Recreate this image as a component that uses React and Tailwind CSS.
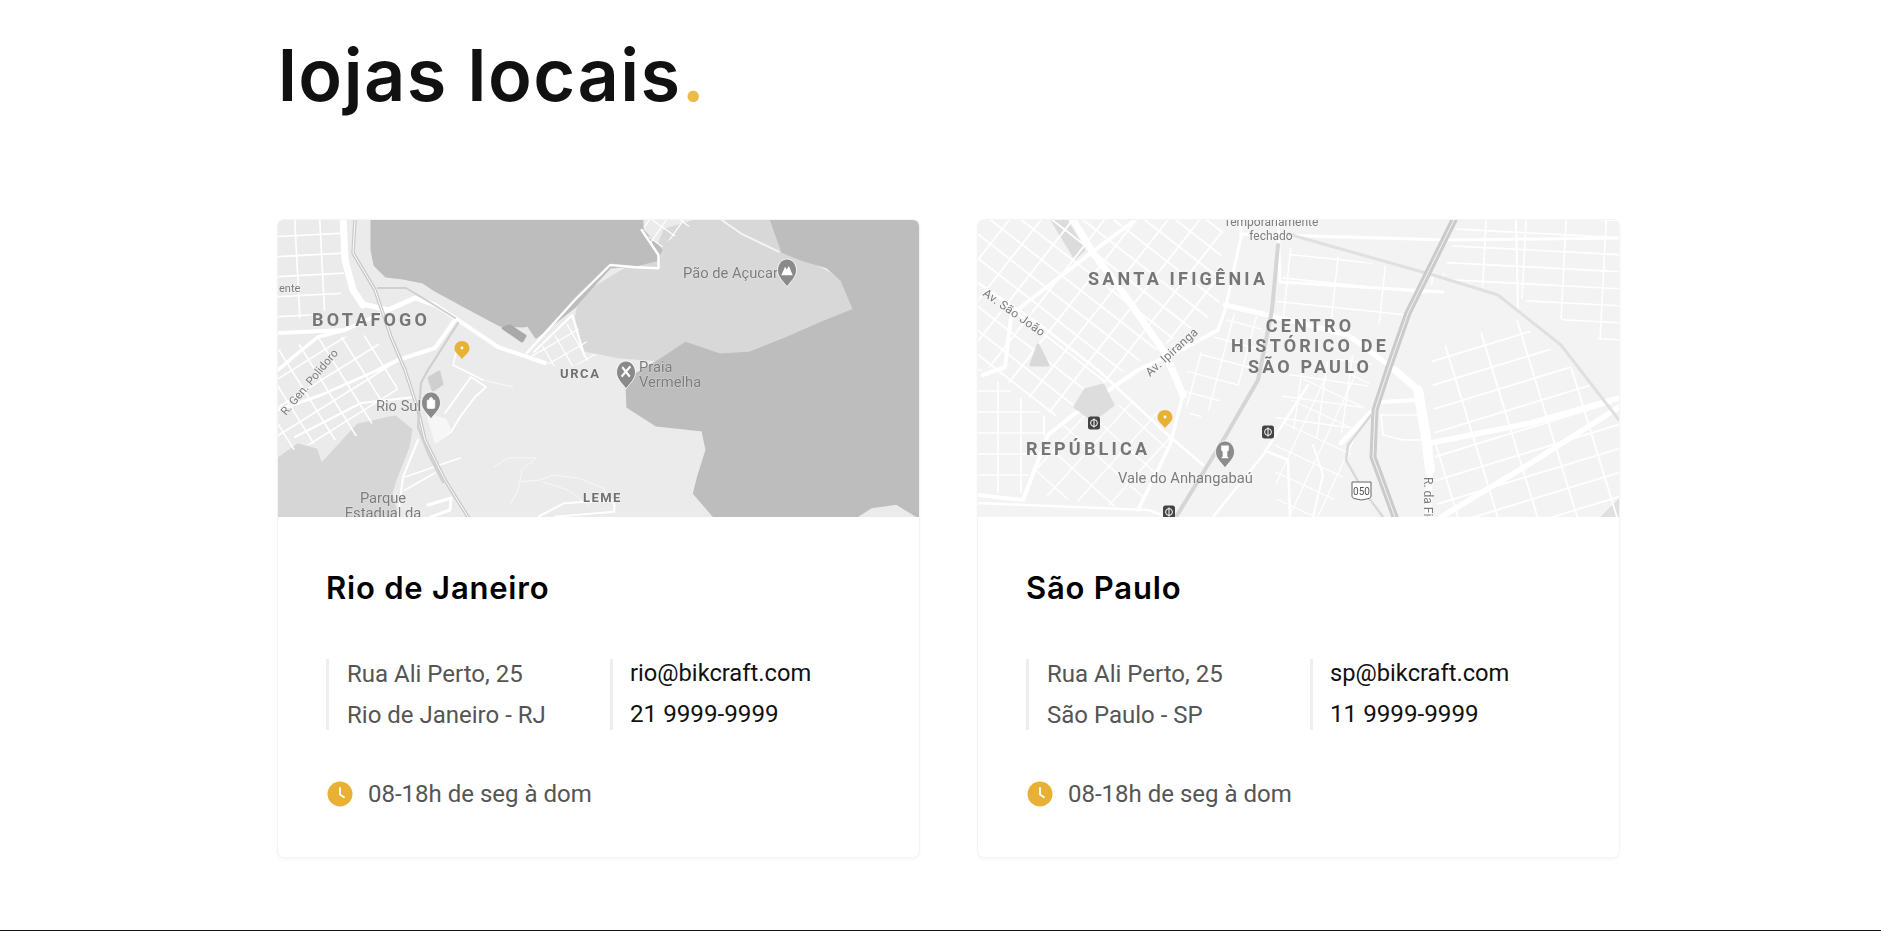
const R = "font-['Roboto',sans-serif]";

const toStr = (pts, ox) =>
  pts.map(([x, y]) => (ox === undefined ? `${x},${y}` : `${((x - ox) / 2.373).toFixed(1)},${((y - 30) / 3).toFixed(1)}`)).join(" ");

function Road({ pts, ox, w = 2, c = "#ffffff" }) {
  return <polyline points={toStr(pts, ox)} fill="none" stroke={c} strokeWidth={w} strokeLinejoin="round" strokeLinecap="round" />;
}

function Area({ pts, ox, fill }) {
  return <polygon points={toStr(pts, ox)} fill={fill} stroke={fill} strokeWidth="3" strokeLinejoin="round" />;
}

function Grid({ id, clip, ox, angle, sx, sy, w = 1.6, c = "#ffffff" }) {
  const lines = [];
  for (let i = -900; i < 1500; i += sx) lines.push(<line key={"a" + i} x1={i} y1={-900} x2={i} y2={1300} />);
  for (let j = -900; j < 1300; j += sy) lines.push(<line key={"b" + j} x1={-900} y1={j} x2={1500} y2={j} />);
  return (
    <>
      <clipPath id={id}>
        <polygon points={toStr(clip, ox)} />
      </clipPath>
      <g clipPath={`url(#${id})`}>
        <g transform={`rotate(${angle} 320 150)`} stroke={c} strokeWidth={w}>
          {lines}
        </g>
      </g>
    </>
  );
}

function Pin({ cx, top, color = "#e8b135", w = 15, h = 18, dot = true, glyph }) {
  return (
    <g transform={`translate(${cx - w / 2} ${top}) scale(${w / 15} ${h / 18})`}>
      <path d="M7.5 0C3.4 0 0 3.2 0 7.3c0 2.5 1.3 4.1 3 6 1.7 1.8 3.6 3.3 4.5 4.7.9-1.4 2.8-2.9 4.5-4.7 1.7-1.9 3-3.5 3-6C15 3.2 11.6 0 7.5 0z" fill={color} stroke={dot ? "none" : "#ffffff"} strokeWidth={dot ? 0 : 0.6} />
      {dot && <circle cx="7.5" cy="7" r="1.4" fill="#ffffff" />}
      {glyph}
    </g>
  );
}

function Metro({ x, y }) {
  return (
    <g transform={`translate(${x - 6} ${y - 6.5})`}>
      <rect width="12" height="13" rx="2.5" fill="#444444" />
      <circle cx="6" cy="6.5" r="3.4" fill="none" stroke="#ffffff" strokeWidth="1" />
      <line x1="6" y1="2" x2="6" y2="11" stroke="#ffffff" strokeWidth="1" />
    </g>
  );
}

function Label({ x, y, children, size = 14.7, weight = 400, sp = 0, anchor = "start", fill = "#7c7c7c", rotate }) {
  return (
    <text
      x={x}
      y={y}
      fontFamily="Roboto, sans-serif"
      fontSize={size}
      fontWeight={weight}
      letterSpacing={sp}
      textAnchor={anchor}
      fill={fill}
      stroke="#ffffff"
      strokeOpacity="0.4"
      strokeWidth="0.8"
      paintOrder="stroke"
      transform={rotate ? `rotate(${rotate} ${x} ${y})` : undefined}
    >
      {children}
    </text>
  );
}

const HOOD = { size: 18, weight: 700, sp: 3.2, fill: "#767676" };

function RioMap() {
  const ox = 42;
  return (
    <svg viewBox="0 0 641 297" className="block w-full h-[297px] blur-[0.4px]">
      <rect width="641" height="297" fill="#ebebeb" />
      <Area fill="#d6d6d6" pts={[[-4,300],[-4,242],[20,225],[38,230],[43,245],[80,205],[117,197],[133,210],[130,227],[117,260],[113,273],[120,300]]} />
      <Area ox={ox} fill="#d8d8d8" pts={[[1040,30],[1215,30],[1240,125],[1290,150],[1385,215],[1412,300],[1330,340],[1240,390],[1160,430],[1090,435],[1010,400],[950,450],[850,440],[770,420],[750,320],[760,260],[940,120],[960,60]]} />
      <Area fill="#bdbdbd" pts={[[94,-3],[94,30],[97,45],[108,56],[125,58],[145,62],[157,70],[190,88],[222,105],[245,106],[250,105],[258,117],[296,87],[320,60],[332,47],[357,45],[378,40],[383,30],[364,10],[364,-3]]} />
      <Area ox={ox} fill="#bdbdbd" pts={[[1210,20],[1240,125],[1290,150],[1345,170],[1380,210],[1410,300],[1330,340],[1240,390],[1160,430],[1090,435],[1010,400],[950,450],[870,510],[872,590],[940,645],[1050,660],[1060,720],[1040,800],[1030,850],[1085,930],[1400,930],[1450,890],[1510,880],[1575,930],[1575,20]]} />

      <Grid id="r1" clip={[[0,0],[66,0],[66,70],[50,90],[0,105]]} angle={-3} sx={25} sy={20} />
      <Grid id="r2" clip={[[0,130],[45,118],[95,115],[112,140],[120,170],[85,215],[30,225],[0,235]]} angle={-32} sx={20} sy={24} />
      <Grid id="r3" ox={ox} clip={[[640,440],[740,330],[800,440],[720,480]]} angle={-30} sx={16} sy={15} w={1.2} />
      <Grid id="r4" ox={ox} clip={[[905,30],[1040,30],[960,100],[940,140]]} angle={35} sx={14} sy={16} w={1.2} />

      <Road w={7} pts={[[65,-5],[67,40],[75,70],[85,85]]} />
      <Road w={5} pts={[[85,84],[110,90],[137,78],[157,85]]} />
      <Road w={4} pts={[[0,113],[67,110],[110,90]]} />
      <Road w={3.5} pts={[[0,150],[20,133],[40,117],[67,110]]} />
      <Road w={4} pts={[[157,85],[180,100],[220,127],[267,143]]} />
      <Road w={4} pts={[[100,150],[120,140],[157,128],[177,100]]} />
      <Road w={3} pts={[[0,190],[43,175],[100,150]]} />
      <Road w={2.2} pts={[[17,217],[83,183],[137,177]]} />
      <Road w={2} pts={[[140,220],[125,257],[120,297]]} />
      <Road w={1.6} pts={[[127,257],[182,238]]} />
      <Road w={1.6} pts={[[127,270],[157,253]]} />
      <Road w={2} pts={[[167,193],[193,157],[208,167],[197,177],[182,197],[173,212],[158,222]]} />
      <Road w={1.6} pts={[[180,125],[175,145],[205,160]]} />
      <Road w={3} pts={[[150,285],[173,278],[172,290],[153,297]]} />
      <Road ox={ox} w={2.4} pts={[[632,430],[750,265],[830,165],[890,172],[945,175],[945,135],[905,60]]} />
      <Road ox={ox} w={2} pts={[[650,425],[740,315],[770,440]]} />
      <Road ox={ox} w={2} c="#f4f4f4" pts={[[1095,30],[1140,70],[1230,125]]} />
      <Road ox={ox} w={2} pts={[[660,920],[720,880],[840,870],[840,905],[700,920]]} />
      <Road w={1} c="#f8f8f8" pts={[[216,247],[230,238],[258,238],[244,250],[240,270],[232,285]]} />
      <Road w={1} c="#f8f8f8" pts={[[240,262],[262,260],[275,255],[300,258],[325,268],[335,285]]} />
      <Road w={1} c="#f8f8f8" pts={[[265,262],[290,270],[310,285]]} />
      <Road w={1.2} c="#f8f8f8" pts={[[205,160],[235,167]]} />

      <Road w={3.5} c="#c9c9c9" pts={[[77,0],[75,33],[97,70],[113,117],[127,150],[140,190],[147,220],[167,260],[190,297]]} />
      <Road w={1} pts={[[77,0],[75,33],[97,70],[113,117],[127,150],[140,190],[147,220],[167,260],[190,297]]} />
      <Road w={2} c="#cfcfcf" pts={[[100,68],[128,68],[153,83],[177,98]]} />
      <Road w={2.2} c="#cfcfcf" pts={[[180,103],[150,150],[143,163],[140,207],[150,233],[165,262]]} />
      <Area fill="#cfcfcf" pts={[[151,158],[161,152],[164,164],[155,170]]} />
      <Area fill="#a9a9a9" pts={[[225,108],[232,106],[247,116],[244,121]]} />
      <Area fill="#f6f6f6" pts={[[150,195],[167,200],[172,210],[158,222]]} />

      <Label x={34} y={106} {...HOOD}>BOTAFOGO</Label>
      <Label x={282} y={158} size={13} weight={700} sp={1.6} fill="#707070">URCA</Label>
      <Label x={305} y={282} size={13} weight={700} sp={1.4} fill="#707070">LEME</Label>
      <Label x={405} y={58}>Pão de Açucar</Label>
      <Label x={361} y={152}>Praia</Label>
      <Label x={361} y={167}>Vermelha</Label>
      <Label x={98} y={191}>Rio Sul</Label>
      <Label x={105} y={283} anchor="middle">Parque</Label>
      <Label x={105} y={298} anchor="middle">Estadual da</Label>
      <Label x={1} y={72} size={11}>ente</Label>
      <Label x={8} y={196} size={11.5} rotate={-50}>R. Gen. Polidoro</Label>

      <Pin cx={509} top={39} w={19} h={28} color="#8a8a8a" dot={false} glyph={<path d="M3 10.5l3-5.5 1.3 1.8L9 4.5l3 6z" fill="#ffffff" />} />
      <Pin cx={348} top={141} w={19} h={28} color="#8a8a8a" dot={false} glyph={<path d="M4 10l7-6.5M4.5 4l6 6" stroke="#ffffff" strokeWidth="1.6" />} />
      <Pin cx={153} top={172} w={19} h={27} color="#8a8a8a" dot={false} glyph={<path d="M4.5 5.5h6v4.5a1 1 0 0 1-1 1h-4a1 1 0 0 1-1-1zM6 5.5c0-2.5 3-2.5 3 0" fill="#ffffff" stroke="#ffffff" strokeWidth="0.5" />} />
      <Pin cx={184} top={121} />
    </svg>
  );
}

function SpMap() {
  const ox = 18;
  return (
    <svg viewBox="0 0 641 297" className="block w-full h-[297px] blur-[0.4px]">
      <rect width="641" height="297" fill="#f3f3f3" />
      <Area fill="#dcdcdc" pts={[[74,0],[88,0],[106,30],[97,38]]} />
      <Area ox={ox} fill="#e0e0e0" pts={[[1500,920],[1540,870],[1540,920]]} />

      <Grid id="s1" ox={ox} clip={[[18,30],[600,30],[590,300],[330,510],[200,620],[18,450]]} angle={38} sx={25} sy={19} w={1.8} />
      <Grid id="s2" ox={ox} clip={[[18,470],[190,630],[120,850],[18,850]]} angle={0} sx={23} sy={21} w={1.7} />
      <Grid id="s3" clip={[[453,130],[540,100],[641,190],[641,297],[460,297]]} angle={-17} sx={38} sy={23} w={1.8} />
      <Grid id="s4" ox={ox} clip={[[1160,30],[1540,30],[1540,420],[1300,260],[1120,200]]} angle={3} sx={40} sy={17} w={1.6} />
      <Grid id="s5" ox={ox} clip={[[760,110],[1110,200],[1030,330],[900,360],[720,310]]} angle={6} sx={48} sy={24} w={1.5} />
      <Grid id="s6" ox={ox} clip={[[620,310],[700,320],[660,500],[530,640],[490,520]]} angle={15} sx={22} sy={20} w={1.4} />
      <Grid id="s7" ox={ox} clip={[[760,480],[960,420],[930,620],[850,700],[720,640]]} angle={8} sx={24} sy={22} w={1.4} />
      <Grid id="s8" ox={ox} clip={[[210,640],[420,560],[480,680],[400,900],[130,850]]} angle={42} sx={26} sy={26} w={1.4} />
      <Grid id="s9" clip={[[320,160],[395,150],[375,230],[350,297],[300,297],[295,230]]} angle={25} sx={26} sy={24} w={1.2} />

      <Road w={7} pts={[[93,-4],[115,33],[143,70],[187,133],[205,175]]} />
      <Road w={3.5} pts={[[205,175],[192,225],[160,290]]} />
      <Road w={4} pts={[[157,0],[113,33],[43,87],[33,97],[27,147],[5,155]]} />
      <Road w={2.6} pts={[[0,63],[60,103],[120,150],[190,215],[225,245]]} />
      <Road w={4} pts={[[240,110],[203,130],[160,150],[95,195],[70,215],[45,280],[0,275]]} />
      <Road w={3} pts={[[263,0],[263,17],[247,90],[240,110]]} />
      <Road w={5} pts={[[247,85],[290,95],[370,115],[417,150]]} />
      <Road w={7} pts={[[417,150],[440,170]]} />
      <Road w={10} pts={[[440,170],[448,217],[452,250]]} />
      <Road w={6} pts={[[452,250],[450,297]]} />
      <Road w={5.5} pts={[[453,223],[553,203],[641,178]]} />
      <Road w={5.5} pts={[[463,297],[553,243],[641,187]]} />
      <Road w={4} pts={[[403,182],[440,180]]} />
      <Road w={5} pts={[[363,223],[400,185]]} />
      <Road w={3} pts={[[263,14],[470,20],[641,18]]} />
      <Road w={2.5} pts={[[0,283],[170,290],[190,297]]} />
      <Road w={3} pts={[[300,0],[302,62],[465,72]]} />
      <Road w={2.5} pts={[[290,232],[310,240],[312,297]]} />
      <Road w={2.5} pts={[[235,297],[285,235],[330,165]]} />
      <Road w={2} pts={[[335,297],[345,255],[335,225]]} />
      <Road w={1.6} pts={[[403,195],[440,195]]} />
      <Road w={1.6} pts={[[403,195],[405,215],[425,220],[445,220]]} />
      <Road w={2} pts={[[538,0],[540,90]]} />

      <Road w={3} c="#e0e0e0" pts={[[310,14],[455,55],[520,75],[583,125],[641,200]]} />
      <Road w={7} c="#cbcbcb" pts={[[476,0],[430,93],[410,150],[397,190],[395,237],[417,297]]} />
      <Road w={1} c="#f5f5f5" pts={[[476,0],[430,93],[410,150],[397,190],[395,237],[417,297]]} />
      <Road w={4} c="#d5d5d5" pts={[[300,25],[294,90],[280,160],[247,217],[198,297]]} />
      <Road w={2.5} c="#d9d9d9" pts={[[393,195],[370,225],[368,240],[385,270],[405,297]]} />
      <Area fill="#dddddd" pts={[[107,170],[125,165],[135,185],[115,200],[97,187]]} />
      <Area fill="#d9d9d9" pts={[[60,125],[70,145],[53,145]]} />

      <Label x={110} y={65} {...HOOD}>SANTA IFIGÊNIA</Label>
      <Label x={332} y={112} {...HOOD} anchor="middle">CENTRO</Label>
      <Label x={332} y={132} {...HOOD} anchor="middle">HISTÓRICO DE</Label>
      <Label x={332} y={153} {...HOOD} anchor="middle">SÃO PAULO</Label>
      <Label x={48} y={235} {...HOOD}>REPÚBLICA</Label>
      <Label x={140} y={263}>Vale do Anhangabaú</Label>
      <Label x={293} y={6} size={12} anchor="middle">Temporariamente</Label>
      <Label x={293} y={20} size={12} anchor="middle">fechado</Label>
      <Label x={4} y={75} size={12} sp={0.3} rotate={35}>Av. São João</Label>
      <Label x={172} y={157} size={12} sp={0.3} rotate={-42}>Av. Ipiranga</Label>
      <Label x={446} y={257} size={12} rotate={90}>R. da Fig</Label>

      <g transform="translate(373 261)">
        <path d="M1 1h19v14c0 1.5-1.2 2-2 2.5L10.5 19 3 17.5c-1-.5-2-1-2-2.5z" fill="#ffffff" stroke="#666666" strokeWidth="1" />
        <text x="10.5" y="14" textAnchor="middle" fontFamily="Roboto, sans-serif" fontSize="10" fill="#555555">050</text>
      </g>
      <Metro x={116} y={203} />
      <Metro x={290} y={212} />
      <Metro x={191} y={292} />
      <Pin cx={247} top={221} w={19} h={27} color="#8c8c8c" dot={false} glyph={<path d="M4.5 3h6v3.2l-1.2 1v3l1.2 1.3h-6l1.2-1.3v-3l-1.2-1z" fill="#ffffff" />} />
      <Pin cx={187} top={190} />
    </svg>
  );
}

function Clock() {
  return (
    <svg width="26" height="26" viewBox="0 0 26 26" className="shrink-0">
      <circle cx="13" cy="13" r="12.5" fill="#e8b135" />
      <path d="M13 7v6.5l4 2.8" fill="none" stroke="#ffffff" strokeWidth="1.8" strokeLinecap="round" />
    </svg>
  );
}

function Card({ map, title, city, email, phone }) {
  return (
    <div className="overflow-hidden rounded-md bg-white shadow-[0_0_0_1px_#f4f4f4,0_2px_4px_rgba(0,0,0,0.05)]">
      {map}
      <div className="h-[340px] pl-[48px] pt-[49px]">
        <h2 className="font-['Inter',sans-serif] font-semibold text-[31px] leading-[44px] tracking-[0.8px] text-black">{title}</h2>
        <div className={`mt-[49px] grid grid-cols-[284px_1fr] grid-rows-[71px] leading-[41px] ${R}`}>
          <div className="border-l-[3px] border-[#eeeeee] pl-[18px] text-[24px] text-[#555555]">
            <p className="-mt-[5px]">Rua Ali Perto, 25</p>
            <p>{city}</p>
          </div>
          <div className="border-l-[3px] border-[#eeeeee] pl-[17px] text-[#111111]">
            <p className="-mt-[6px] text-[23.7px]">{email}</p>
            <p className="text-[24.2px]">{phone}</p>
          </div>
        </div>
        <div className={`mt-[48px] flex items-center gap-[15px] text-[24px] leading-[32px] text-[#555555] pl-[1px] ${R}`}>
          <Clock />
          <span>08-18h de seg à dom</span>
        </div>
      </div>
    </div>
  );
}

export default function App() {
  return (
    <div className="h-[931px] bg-white border-b border-[#111111] overflow-hidden">
      <div className="ml-[278px] w-[1341px]">
        <h1 className="pt-[29px] h-[220px] font-['Inter',sans-serif] font-semibold text-[72px] leading-[92px] text-[#111111] tracking-[1.5px]">
          lojas locais<span className="text-[#ecbb4a]">.</span>
        </h1>
        <div className="grid grid-cols-2 gap-[59px]">
          <Card map={<RioMap />} title="Rio de Janeiro" city="Rio de Janeiro - RJ" email="rio@bikcraft.com" phone="21 9999-9999" />
          <Card map={<SpMap />} title="São Paulo" city="São Paulo - SP" email="sp@bikcraft.com" phone="11 9999-9999" />
        </div>
      </div>
    </div>
  );
}
